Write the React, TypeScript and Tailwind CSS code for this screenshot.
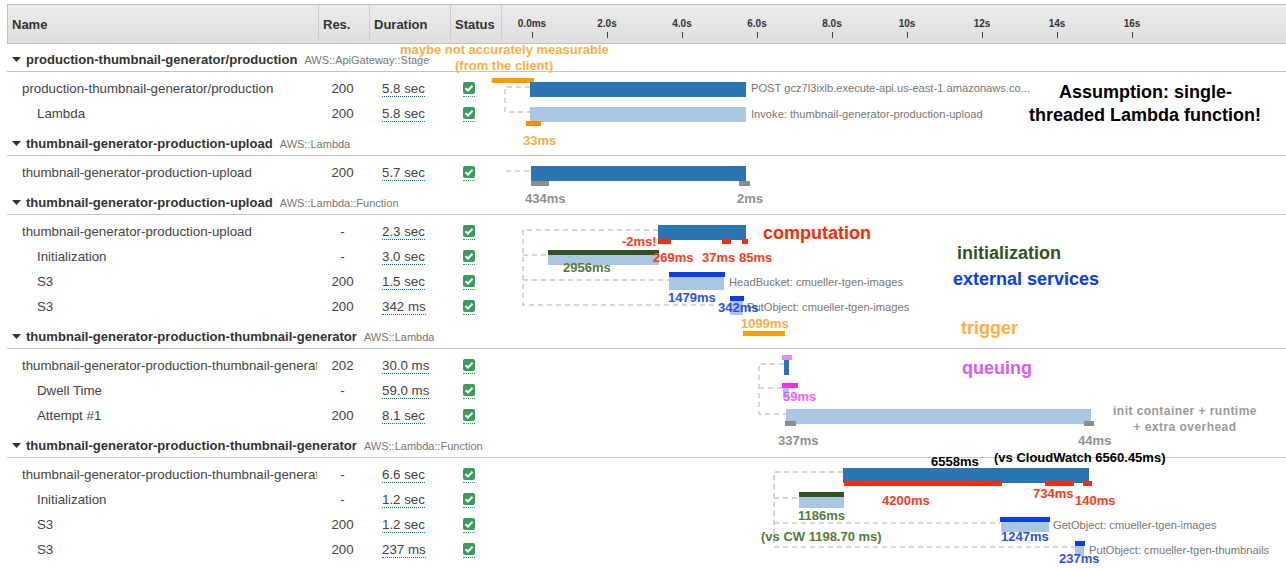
import React from "react";

interface Row {
  name: string;
  res: string;
  duration: string;
  child?: boolean;
}

interface Group {
  name: string;
  type: string;
  rows: Row[];
}

const groups: Group[] = [
  {
    name: "production-thumbnail-generator/production",
    type: "AWS::ApiGateway::Stage",
    rows: [
      { name: "production-thumbnail-generator/production", res: "200", duration: "5.8 sec" },
      { name: "Lambda", res: "200", duration: "5.8 sec", child: true },
    ],
  },
  {
    name: "thumbnail-generator-production-upload",
    type: "AWS::Lambda",
    rows: [{ name: "thumbnail-generator-production-upload", res: "200", duration: "5.7 sec" }],
  },
  {
    name: "thumbnail-generator-production-upload",
    type: "AWS::Lambda::Function",
    rows: [
      { name: "thumbnail-generator-production-upload", res: "-", duration: "2.3 sec" },
      { name: "Initialization", res: "-", duration: "3.0 sec", child: true },
      { name: "S3", res: "200", duration: "1.5 sec", child: true },
      { name: "S3", res: "200", duration: "342 ms", child: true },
    ],
  },
  {
    name: "thumbnail-generator-production-thumbnail-generator",
    type: "AWS::Lambda",
    rows: [
      { name: "thumbnail-generator-production-thumbnail-generator", res: "202", duration: "30.0 ms" },
      { name: "Dwell Time", res: "-", duration: "59.0 ms", child: true },
      { name: "Attempt #1", res: "200", duration: "8.1 sec", child: true },
    ],
  },
  {
    name: "thumbnail-generator-production-thumbnail-generator",
    type: "AWS::Lambda::Function",
    rows: [
      { name: "thumbnail-generator-production-thumbnail-generator", res: "-", duration: "6.6 sec" },
      { name: "Initialization", res: "-", duration: "1.2 sec", child: true },
      { name: "S3", res: "200", duration: "1.2 sec", child: true },
      { name: "S3", res: "200", duration: "237 ms", child: true },
    ],
  },
];

const ticks = ["0.0ms", "2.0s", "4.0s", "6.0s", "8.0s", "10s", "12s", "14s", "16s"];

const DARK = "#2b75b3";
const LIGHT = "#a9c7e0";
const ORANGE = "#ff9e00";
const RED = "#ff2a00";
const GRAY = "#8c8c8c";
const GREEN = "#35511f";
const BLUE = "#0a3cf0";

const AMBER_TEXT = "#ffae42";
const RED_TEXT = "#ff3b1a";
const GRAY_TEXT = "#8f8f8f";
const GREEN_TEXT = "#557a3a";
const BLUE_TEXT = "#2b4ff0";

// x, y, width, height, colour
const bars: [number, number, number, number, string][] = [
  [492, 78, 42, 5, ORANGE],
  [530, 82, 216, 15, DARK],
  [530, 107, 216, 15, LIGHT],
  [526, 121, 15, 5, "#ff8c00"],
  [531, 166, 215, 15, DARK],
  [531, 181, 18, 5, GRAY],
  [739, 181, 11, 5, GRAY],
  [658, 225, 88, 15, DARK],
  [658, 239, 13, 5, RED],
  [722, 239, 9, 5, RED],
  [742, 239, 6, 5, RED],
  [548, 250, 111, 15, LIGHT],
  [548, 250, 111, 5, GREEN],
  [669, 275, 55, 15, LIGHT],
  [669, 272, 56, 5, BLUE],
  [730, 300, 13, 15, LIGHT],
  [730, 296, 14, 5, BLUE],
  [743, 331, 42, 5, ORANGE],
  [784, 360, 5, 15, DARK],
  [782, 355, 10, 5, "#e28cf5"],
  [783, 385, 6, 13, LIGHT],
  [782, 383, 16, 5, "#ff2bf0"],
  [786, 409, 305, 15, LIGHT],
  [785, 421, 11, 5, GRAY],
  [1084, 421, 10, 5, GRAY],
  [843, 468, 246, 15, DARK],
  [844, 481, 158, 5, RED],
  [1045, 481, 29, 5, RED],
  [1083, 481, 9, 5, RED],
  [799, 492, 45, 16, LIGHT],
  [799, 492, 45, 5, GREEN],
  [1001, 517, 48, 15, LIGHT],
  [1000, 517, 50, 5, BLUE],
  [1075, 541, 9, 15, LIGHT],
  [1075, 541, 10, 5, BLUE],
];

const connectors = [
  "M530 87H505V112H530",
  "M506 171H531",
  "M658 230H523V305H730M523 255H548M523 280H669",
  "M784 364H759V414H786M759 388H784",
  "M843 472H774V547H1075M774 498H799M774 523H1000",
];

// service names next to the bars
const labels: [string, number, number][] = [
  ["POST gcz7l3ixlb.execute-api.us-east-1.amazonaws.co...", 751, 92],
  ["Invoke: thumbnail-generator-production-upload", 751, 118],
  ["HeadBucket: cmueller-tgen-images", 729, 286],
  ["PutObject: cmueller-tgen-images", 747, 311],
  ["GetObject: cmueller-tgen-images", 1053, 529],
  ["PutObject: cmueller-tgen-thumbnails", 1089, 554],
];

// hand written notes: text, x, baseline, size, colour
const notes: [string, number, number, number, string][] = [
  ["maybe not accurately measurable", 400, 53.5, 13, AMBER_TEXT],
  ["(from the client)", 455, 69.5, 13, AMBER_TEXT],
  ["33ms", 523, 144.5, 13, AMBER_TEXT],
  ["Assumption: single-", 1059, 98, 18, "#000000"],
  ["threaded Lambda function!", 1029, 121, 18, "#000000"],
  ["434ms", 525, 202.5, 13, GRAY_TEXT],
  ["2ms", 737, 202.5, 13, GRAY_TEXT],
  ["-2ms!", 622, 245.5, 13, RED_TEXT],
  ["269ms", 653, 261.5, 13, RED_TEXT],
  ["37ms", 702, 261.5, 13, RED_TEXT],
  ["85ms", 739, 261.5, 13, RED_TEXT],
  ["2956ms", 563, 271.5, 13, GREEN_TEXT],
  ["1479ms", 668, 301.5, 13, BLUE_TEXT],
  ["342ms", 718, 311.5, 13, BLUE_TEXT],
  ["1099ms", 741, 327.5, 13, AMBER_TEXT],
  ["computation", 763, 239, 18, "#ff2a00"],
  ["initialization", 957, 259, 18, GREEN],
  ["external services", 953, 285, 18, BLUE],
  ["trigger", 961, 334, 18, AMBER_TEXT],
  ["queuing", 962, 374, 18, "#d65cf5"],
  ["59ms", 783, 400.5, 13, "#ff5cf5"],
  ["337ms", 778, 444.5, 13, GRAY_TEXT],
  ["44ms", 1078, 444.5, 13, GRAY_TEXT],
  ["6558ms", 931, 465.5, 13, "#000000"],
  ["(vs CloudWatch 6560.45ms)", 994, 461.5, 13, "#000000"],
  ["4200ms", 882, 504.5, 13, RED_TEXT],
  ["734ms", 1033, 497.5, 13, RED_TEXT],
  ["140ms", 1075, 504.5, 13, RED_TEXT],
  ["1186ms", 798, 519.5, 13, GREEN_TEXT],
  ["(vs CW 1198.70 ms)", 761, 540.5, 13, GREEN_TEXT],
  ["1247ms", 1001, 540.5, 13, BLUE_TEXT],
  ["237ms", 1059, 562.5, 13, BLUE_TEXT],
];

const Check = () => (
  <span className="inline-flex border-b border-dotted border-[#2f9e55] pb-[2px]">
    <span className="flex h-[12px] w-[12px] items-center justify-center rounded-[2px] bg-[#3b9c5d]">
      <svg width="10" height="10" viewBox="0 0 10 10" fill="none">
        <path d="M1.5 5.2L4 7.5L8.5 2.8" stroke="white" strokeWidth="2" />
      </svg>
    </span>
  </span>
);

const App: React.FC = () => {
  return (
    <div className="relative h-[569px] w-[1286px] overflow-hidden bg-white pl-[7px] pt-[4px] font-['Liberation_Sans',Arial,sans-serif] text-[13px] text-[#444444]">
      {/* header */}
      <div className="flex h-[40px] items-start border-y border-l border-[#bfbfbf] bg-linear-to-b from-[#ececec] to-[#dedede] font-bold text-[#333333]">
        <div className="flex h-[35px] w-[310px] items-center pl-[4px] pt-[4px]">Name</div>
        <div className="flex h-[35px] w-[51px] items-center border-l border-[#cccccc] pl-[4px] pt-[4px]">Res.</div>
        <div className="flex h-[35px] w-[81px] items-center border-l border-[#cccccc] pl-[4px] pt-[4px]">Duration</div>
        <div className="flex h-[35px] w-[51px] items-center border-l border-[#cccccc] pl-[4px] pt-[4px]">Status</div>
        <div className="h-[35px] flex-1 border-l border-[#cccccc]">
          <div className="ml-[-7.5px] flex pt-[12px]">
            {ticks.map((t) => (
              <div key={t} className="flex w-[75px] flex-col items-center">
                <span className="text-[10px] leading-[14px]">{t}</span>
                <span className="mt-[1px] h-[6px] w-px bg-[#444444]" />
              </div>
            ))}
          </div>
        </div>
      </div>

      {/* trace groups */}
      {groups.map((group, i) => (
        <div key={i}>
          <div
            className={`flex items-end border-b border-[#c4c4c4] pb-[3px] ${i === 0 ? "h-[28px]" : "h-[30px]"}`}
          >
            <svg width="9" height="5" viewBox="0 0 9 5" className="mb-[6px] ml-[5px] shrink-0">
              <path d="M0 0H9L4.5 5Z" fill="#333333" />
            </svg>
            <span className="ml-[5px] text-[13.07px] font-bold leading-[16px] text-[#333333]">{group.name}</span>
            <span className="ml-[7px] text-[11px] leading-[16px] text-[#777777]">{group.type}</span>
          </div>
          <div className="pt-[4px]">
            {group.rows.map((row, j) => (
              <div key={j} className="flex h-[25px] items-center text-[13.3px] leading-[15px]">
                <div
                  className={`w-[310px] overflow-hidden whitespace-nowrap ${row.child ? "pl-[30px]" : "pl-[15px]"}`}
                >
                  {row.name}
                </div>
                <div className="w-[51px] text-center">{row.res}</div>
                <div className="w-[81px] pl-[14px]">
                  <span className="inline-block border-b border-dotted border-[#0073bb]">{row.duration}</span>
                </div>
                <div className="h-[25px] w-[51px] pl-[14px] pt-[5px]">
                  <Check />
                </div>
              </div>
            ))}
          </div>
        </div>
      ))}

      {/* timeline drawing, lies over the rows */}
      <svg width="1286" height="569" className="pointer-events-none absolute left-0 top-0">
        {connectors.map((d) => (
          <path key={d} d={d} fill="none" stroke="#c9c9c9" strokeWidth="1.5" strokeDasharray="5 4" />
        ))}
        {bars.map(([x, y, w, h, c], i) => (
          <rect key={i} x={x} y={y} width={w} height={h} fill={c} />
        ))}
        {labels.map(([t, x, y]) => (
          <text key={t + x} x={x} y={y} fontSize="11.15" fill="#777777">
            {t}
          </text>
        ))}
        {notes.map(([t, x, y, size, c]) => (
          <text key={t + x} x={x} y={y} fontSize={size} fontWeight="bold" fill={c}>
            {t}
          </text>
        ))}
        <g fontSize="12" fontWeight="bold" fill="#9a9a9a" textAnchor="middle" letterSpacing="0.45">
          <text x="1185" y="415">
            init container + runtime
          </text>
          <text x="1185" y="431">
            + extra overhead
          </text>
        </g>
      </svg>
    </div>
  );
};

export default App;
